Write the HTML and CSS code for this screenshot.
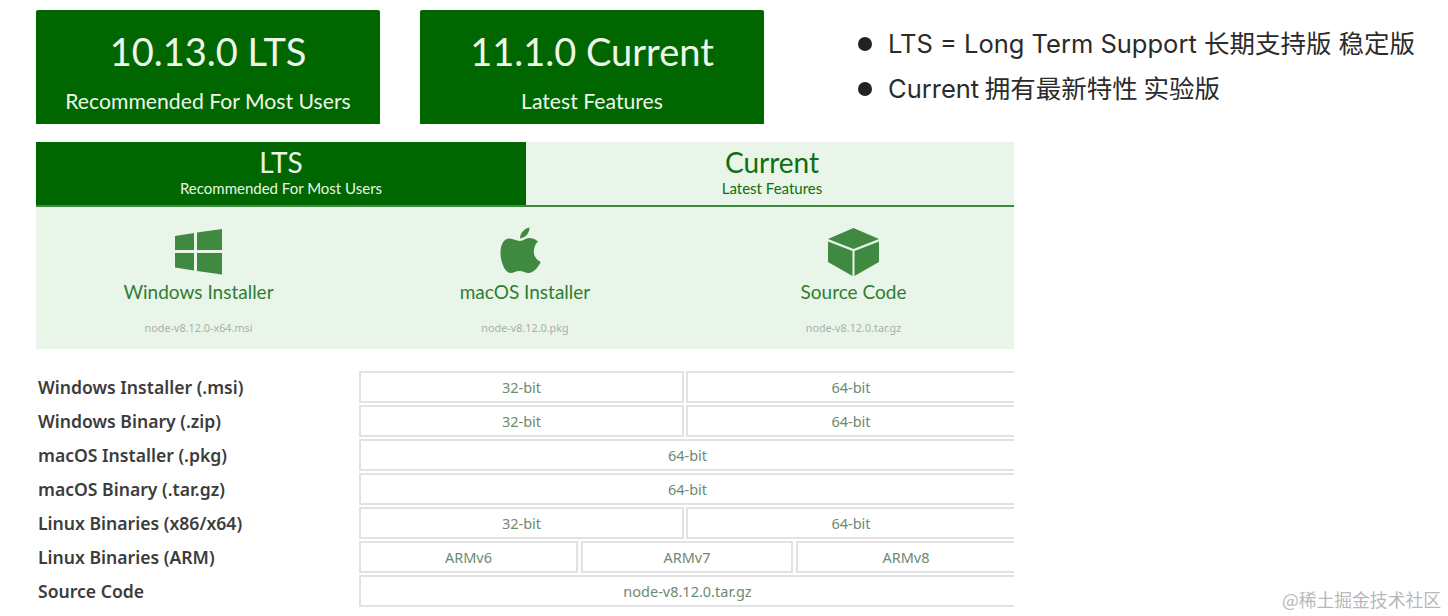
FILE: index.html
```html
<!DOCTYPE html>
<html lang="zh-CN">
<head>
    <meta charset="UTF-8">
    <title>Node.js LTS / Current</title>
    <link rel="stylesheet" href="styles.css">
</head>
<body>
    <div class="page">
        <div class="top-row">
            <div class="version-card">
                <div class="version-title">10.13.0 LTS</div>
                <div class="version-sub">Recommended For Most Users</div>
            </div>
            <div class="version-card">
                <div class="version-title">11.1.0 Current</div>
                <div class="version-sub">Latest Features</div>
            </div>
            <ul class="notes">
                <li>LTS = Long Term Support 长期支持版 稳定版</li>
                <li>Current 拥有最新特性 实验版</li>
            </ul>
        </div>

        <div class="tabs">
            <div class="tab tab-active">
                <div class="tab-title">LTS</div>
                <div class="tab-sub">Recommended For Most Users</div>
            </div>
            <div class="tab tab-other">
                <div class="tab-title">Current</div>
                <div class="tab-sub">Latest Features</div>
            </div>
        </div>

        <div class="installers">
            <div class="installer">
                <svg class="icon" width="80" height="54" viewBox="-1 0 80 54">
                    <polygon points="15,12 34,9 34,26 15,26"/>
                    <polygon points="37,8.5 62,5 62,26 37,26"/>
                    <polygon points="15,29 34,29 34,46.5 15,43.5"/>
                    <polygon points="37,29 62,29 62,50.5 37,47"/>
                </svg>
                <div class="installer-name">Windows Installer</div>
                <div class="installer-file">node-v8.12.0-x64.msi</div>
            </div>
            <div class="installer">
                <svg class="icon" width="60" height="54" viewBox="5 3 60 54">
                    <path d="M30 20C26 20 23 17.5 19.5 17.5C13 17.5 10.5 25 10.5 32C10.5 41 15 52 20.5 52C24 52 25.5 50 29.5 50C33.5 50 35 52 38.5 52C43.5 52 48.5 46 50.7 41C46 38.5 43.8 35 43.8 30.7C43.8 26 45.5 23 48 20.5C45.5 18 42 17 39 17C35.5 17 33.5 20 30 20Z"/>
                    <path d="M30 17.5C30 12 34.5 7.5 39.5 6.5C39.5 12 35.5 17 30 17.5Z"/>
                </svg>
                <div class="installer-name">macOS Installer</div>
                <div class="installer-file">node-v8.12.0.pkg</div>
            </div>
            <div class="installer installer-last">
                <svg class="icon" width="70" height="54" viewBox="-1 4 70 54">
                    <polygon points="33.5,8 59,19 33.5,29 8,19"/>
                    <polygon points="8,21.5 32.5,31 32.5,56 8,42"/>
                    <polygon points="59,21.5 34.5,31 34.5,56 59,42"/>
                </svg>
                <div class="installer-name">Source Code</div>
                <div class="installer-file">node-v8.12.0.tar.gz</div>
            </div>
        </div>

        <div class="downloads">
            <div class="dl-label">Windows Installer (.msi)</div>
            <div class="dl-row dl-row-split"><div class="dl-cell">32-bit</div><div class="dl-cell">64-bit</div></div>
            <div class="dl-label">Windows Binary (.zip)</div>
            <div class="dl-row dl-row-split"><div class="dl-cell">32-bit</div><div class="dl-cell">64-bit</div></div>
            <div class="dl-label">macOS Installer (.pkg)</div>
            <div class="dl-row"><div class="dl-cell">64-bit</div></div>
            <div class="dl-label">macOS Binary (.tar.gz)</div>
            <div class="dl-row"><div class="dl-cell">64-bit</div></div>
            <div class="dl-label">Linux Binaries (x86/x64)</div>
            <div class="dl-row dl-row-split"><div class="dl-cell">32-bit</div><div class="dl-cell">64-bit</div></div>
            <div class="dl-label">Linux Binaries (ARM)</div>
            <div class="dl-row dl-row-arm"><div class="dl-cell">ARMv6</div><div class="dl-cell">ARMv7</div><div class="dl-cell">ARMv8</div></div>
            <div class="dl-label">Source Code</div>
            <div class="dl-row"><div class="dl-cell">node-v8.12.0.tar.gz</div></div>
        </div>
    </div>
    <div class="watermark">@稀土掘金技术社区</div>
</body>
</html>
```

FILE: styles.css
```css
* {
    margin: 0;
    padding: 0;
    box-sizing: border-box;
}

body {
    background: white;
    font-family: 'Noto Sans', sans-serif;
    height: 616px;
    overflow: hidden;
}

.page {
    padding: 10px 0 0 36px;
}

.top-row {
    display: flex;
    gap: 40px;
}

.version-card {
    width: 344px;
    height: 114px;
    background: #006600;
    border-radius: 2px 2px 0 0;
    color: #eef6ea;
    text-align: center;
    font-family: Lato, sans-serif;
}

.version-title {
    font-size: 38px;
    line-height: 46px;
    margin-top: 18px;
}

.version-sub {
    font-size: 21.2px;
    line-height: 26px;
    margin-top: 14px;
}

.notes {
    list-style: none;
    margin-left: 54px;
    padding-top: 11px;
    font-family: Inter, 'Noto Sans CJK SC', sans-serif;
    font-size: 25.5px;
    line-height: 45px;
    color: #2b2b2b;
}

.notes li {
    display: flex;
    align-items: center;
    gap: 16px;
    white-space: pre;
}

.notes li:last-child {
    word-spacing: -1.5px;
}

.notes li::before {
    content: '';
    width: 14px;
    height: 14px;
    border-radius: 50%;
    background: #222;
}

.tabs {
    display: flex;
    width: 978px;
    height: 65px;
    margin-top: 18px;
    background: #e9f5e9;
    border-bottom: 2px solid #3f8a40;
    font-family: Lato, sans-serif;
    text-align: center;
    color: #0e6f10;
}

.tab {
    flex: 1;
}

.tab-active {
    flex: 0 0 490px;
    background: #006600;
    color: #e9f5e9;
}

.tab-other {
    padding-left: 4px;
}

.tab-title {
    font-size: 28px;
    line-height: 32px;
    margin-top: 4px;
}

.tab-sub {
    font-size: 15px;
    line-height: 18px;
    margin-top: 1px;
}

.installers {
    display: grid;
    grid-template-columns: 325px 328px 325px;
    width: 978px;
    height: 142px;
    background: #e9f5e9;
    text-align: center;
}

.installer {
    padding-top: 17px;
}

.installer-last {
    padding-left: 4px;
}

.icon {
    display: block;
    margin: 0 auto;
    fill: #3f8a40;
}

.installer-name {
    font-family: Lato, sans-serif;
    font-size: 19px;
    line-height: 24px;
    margin-top: 2px;
    color: #2f7d31;
}

.installer-file {
    font-size: 10.8px;
    line-height: 14px;
    margin-top: 17px;
    color: #a8b0a8;
}

.downloads {
    display: grid;
    grid-template-columns: 323px 655px;
    row-gap: 2px;
    margin-top: 22px;
}

.dl-label {
    padding-left: 2px;
    font-size: 17.6px;
    font-weight: 600;
    line-height: 33px;
    height: 32px;
    color: #3c3c3c;
}

.dl-row {
    display: grid;
    grid-auto-flow: column;
    grid-auto-columns: 1fr;
}

.dl-row-split {
    grid-template-columns: 325px 1fr;
    column-gap: 2px;
}

.dl-row-arm {
    grid-template-columns: 219px 212px 1fr;
    column-gap: 3px;
}

.dl-cell {
    height: 32px;
    border: 2px solid #e2e2e2;
    background: white;
    font-size: 14.5px;
    line-height: 29px;
    text-align: center;
    color: #6d8a72;
}

.dl-cell:last-child {
    border-right: none;
}

.watermark {
    position: absolute;
    right: 7px;
    bottom: 5px;
    font-family: 'Noto Sans CJK SC', sans-serif;
    font-size: 17.8px;
    line-height: 24px;
    color: #b8b8b8;
}
```
